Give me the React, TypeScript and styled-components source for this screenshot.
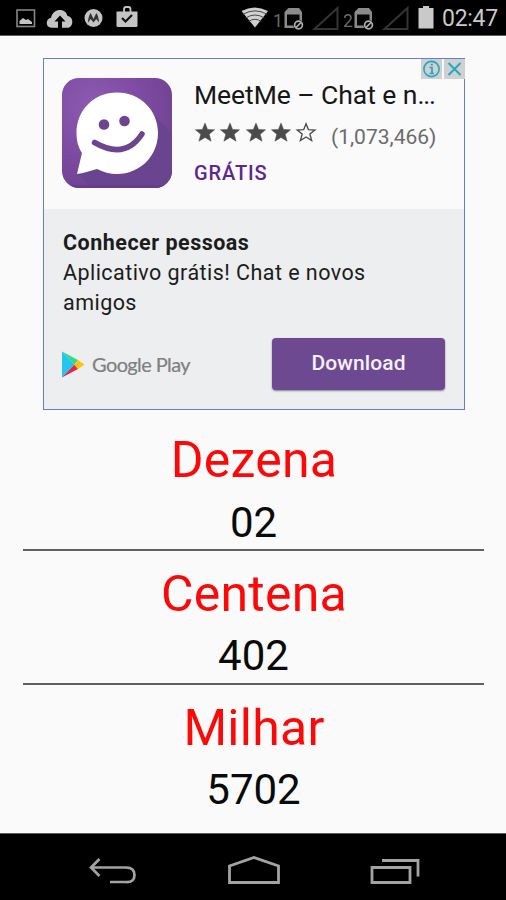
import React from "react";
import styled, { createGlobalStyle } from "styled-components";

const GlobalStyle = createGlobalStyle`
  * { box-sizing: border-box; }
  body { margin: 0; background: #fafafa; }
`;

const Screen = styled.div`
  width: 506px;
  height: 900px;
  display: flex;
  flex-direction: column;
  overflow: hidden;
  background: #fafafa;
  color: #000;
  font-family: Roboto, "Liberation Sans", sans-serif;
`;

const StatusBar = styled.header`
  height: 36px;
  flex: none;
  display: flex;
  justify-content: space-between;
  background: #000;
  border-bottom: 1px solid #5c5c5c;
`;

const StatusGroup = styled.div`
  display: flex;
  height: 35px;
`;

const Clock = styled.time`
  width: 64px;
  font-size: 23px;
  line-height: 37px;
  letter-spacing: -0.3px;
  color: #c9c9c9;
`;

const Content = styled.main`
  flex: 1;
  display: flex;
  flex-direction: column;
  padding: 22px 22px 0 23px;
`;

const AdCard = styled.section`
  position: relative;
  width: 422px;
  height: 352px;
  margin-left: 20px;
  display: flex;
  flex-direction: column;
  border: 1.5px solid #6580c8;
`;

const AdChoices = styled.div`
  position: absolute;
  top: 0;
  right: -1px;
  display: flex;
  gap: 2px;
`;

const AdBadge = styled.span`
  width: 21px;
  height: 20px;
  display: flex;
  background: #d0d0d0;
`;

const AdHeader = styled.div`
  height: 150px;
  display: flex;
  padding: 18.5px 0 0 18px;
`;

const AdInfo = styled.div`
  padding-left: 22px;
  display: flex;
  flex-direction: column;
`;

const AdTitle = styled.h1`
  margin: 1px 0 0;
  font-weight: 400;
  font-size: 26.5px;
  line-height: 32px;
  letter-spacing: -0.06px;
  white-space: nowrap;
  color: #161616;
`;

const Ellipsis = styled.span`
  letter-spacing: -1.2px;
`;

const RatingRow = styled.div`
  height: 34px;
  margin: 9px 0 0 -1px;
  display: flex;
  align-items: flex-start;
`;

const ReviewCount = styled.span`
  margin-left: 11.5px;
  font-size: 21px;
  line-height: 34px;
  color: #6b6b6b;
`;

const Price = styled.span`
  margin-top: 7px;
  font-size: 20px;
  font-weight: 500;
  line-height: 24px;
  letter-spacing: 0.9px;
  color: #5e2590;
`;

const AdBody = styled.div`
  flex: 1;
  display: flex;
  flex-direction: column;
  padding: 18px 18px 0 19px;
  background: #eceeef;
  color: #1c1c1c;
`;

const AdHeadline = styled.h2`
  margin: 0;
  font-size: 21.5px;
  font-weight: 700;
  line-height: 31px;
  letter-spacing: 0.5px;
`;

const AdText = styled.p`
  margin: 0;
  font-size: 21.5px;
  line-height: 30px;
  letter-spacing: 0.45px;
`;

const AdFooter = styled.div`
  display: flex;
  justify-content: space-between;
  margin-top: 20px;
`;

const StoreBadge = styled.div`
  display: flex;
  padding-top: 13px;
  margin-left: -1px;
`;

const StoreName = styled.span`
  margin-left: 7px;
  font-family: Lato, sans-serif;
  font-size: 20px;
  line-height: 27px;
  letter-spacing: -0.6px;
  color: #7e8082;
  -webkit-text-stroke: 0.2px #7e8082;
  white-space: nowrap;
`;

const DownloadButton = styled.button`
  width: 173px;
  height: 52px;
  margin-right: 1px;
  padding: 0 0 1px;
  border: 0;
  border-radius: 4px;
  background: #6d4992;
  box-shadow: 0 1px 2px rgba(0, 0, 0, 0.45);
  color: #f6effb;
  font: 500 21px/51px Roboto, sans-serif;
  letter-spacing: 0.1px;
`;

const Results = styled.div`
  padding-top: 20px;
`;

const ResultGroup = styled.section<{ $last?: boolean }>`
  height: ${(p) => (p.$last ? "118px" : "121px")};
  margin-bottom: 12.8px;
  text-align: center;
  border-bottom: ${(p) => (p.$last ? "0" : "2px solid #606060")};
`;

const ResultLabel = styled.h3`
  margin: 0;
  padding-left: 1px;
  font-size: 50px;
  font-weight: 400;
  line-height: 60px;
  letter-spacing: 0.25px;
  color: #fd0808;
`;

const ResultValue = styled.div`
  margin-top: 7.6px;
  font-size: 42px;
  line-height: 50px;
  color: #0a0a0a;
`;

const NavBar = styled.nav`
  height: 67px;
  flex: none;
  background: #000;
  border-top: 1px solid #5c5c5c;
  display: flex;
  justify-content: space-between;
  align-items: flex-start;
  padding: 16px 85px 0 87px;
`;

const Icon = styled.svg`
  display: block;
  flex: none;
`;

const NotificationIcons = () => (
  <Icon width="150" height="35" viewBox="0 0 150 35">
    <rect x="17" y="10" width="17.5" height="16.500" fill="none" stroke="#858585" strokeWidth="1.6" />
    <path d="M19.500 24v-3l3.500-3 3 2 2-1 4 3v2z" fill="#c4c4c4" />
    <path
      d="M51.500 27.800C45 27.800 45.500 18.500 51 17.800C53 8 65.500 7.500 67.500 16C74.500 17 73.500 27.800 67.500 27.800H62V21.500h3.500L60 15.500 54.500 21.500h3.500v6.300z"
      fill="#c4c4c4"
    />
    <circle cx="93.500" cy="18" r="9" fill="#c4c4c4" />
    <path d="M88 22.500c0-4 1.500-8 2.700-9.500l2.800 6 2.800-6c1.200 1.500 2.700 5.500 2.700 9.500l-2.700-3.500-2.800 3.500-2.800-3.500z" fill="#333" />
    <path d="M124 12V9.500q0-2.500 2-2.500h2.500q2 0 2 2.500V12" fill="none" stroke="#c4c4c4" strokeWidth="1.800" />
    <path d="M116.500 11.500h21v14q0 1.500-1.500 1.500h-18q-1.500 0-1.500-1.500z" fill="#c4c4c4" />
    <path d="M122 18l3.500 3.500 6.500-6.500" fill="none" stroke="#111" strokeWidth="2.200" />
  </Icon>
);

const SimIcon = ({ slot }: { slot: string }) => (
  <Icon width="34" height="35" viewBox="0 0 34 35">
    <text x="-1" y="26.500" fontSize="17.500" fill="#6a6a6a" fontFamily="Roboto">{slot}</text>
    <path d="M10.500 12l4-4h10.500l3 4v16H10.500z" fill="#8b8b8b" />
    <path d="M13 14.500h12.500v11H13z" fill="#050505" />
    <circle cx="24.500" cy="25" r="5.200" fill="#000" />
    <circle cx="24.500" cy="25" r="3.900" fill="none" stroke="#b0b0b0" strokeWidth="1.700" />
    <path d="M22 27.500l5-5" stroke="#b0b0b0" strokeWidth="1.700" />
  </Icon>
);

const SignalIcon = () => (
  <Icon width="36" height="35" viewBox="0 0 36 35">
    <path d="M6.500 29L29.500 8v21z" fill="none" stroke="#343434" strokeWidth="2" />
  </Icon>
);

const WifiIcon = () => (
  <Icon width="33" height="35" viewBox="0 0 33 35">
    <path d="M.5 11Q13.500 4 27 11L14 27.500z" fill="#d0d0d0" />
    <path d="M2 14.200q12-6.700 24 0M4.500 18q9.500-6 19 0M7.500 21.500q6.500-4.500 13 0" fill="none" stroke="#484848" strokeWidth="1" />
  </Icon>
);

const BatteryIcon = () => (
  <Icon width="28" height="35" viewBox="0 0 28 35">
    <path d="M9 6h6v2h4.500v20.500H4.500V8H9z" fill="#c9c9c9" />
  </Icon>
);

const AppIcon = () => (
  <Icon width="110" height="110" viewBox="0 0 110 110">
    <defs>
      <radialGradient id="tile" cx="0.28" cy="0.25" r="0.8">
        <stop offset="0" stopColor="#8d5bb2" />
        <stop offset="0.5" stopColor="#804ca5" />
        <stop offset="1" stopColor="#704291" />
      </radialGradient>
      <clipPath id="tileClip">
        <rect width="110" height="110" rx="17" />
      </clipPath>
    </defs>
    <g clipPath="url(#tileClip)">
      <rect width="110" height="110" fill="url(#tile)" />
      <path d="M88 33l22 22v55H29L15 96z" fill="#6b448f" />
      <rect y="107" width="110" height="3" fill="#613988" opacity="0.6" />
    </g>
    <path
      d="M55 14.500C78 14.500 96 32 96 55S78 96 55 96C48 96 41 94 35 91C28 93 21 95.500 15 96L20 75C16 69 14.500 62 14.500 55C14.500 32 32 14.500 55 14.500z"
      fill="#fff"
    />
    <circle cx="42" cy="46.500" r="5.300" fill="#6c448f" />
    <circle cx="62.500" cy="43" r="5.300" fill="#6c448f" />
    <path d="M32.500 64.500Q63 82 80 56" fill="none" stroke="#6c448f" strokeWidth="5.500" strokeLinecap="round" />
  </Icon>
);

const Star = ({ filled }: { filled: boolean }) => (
  <Icon width="25.300" height="26" viewBox="0 0 25.300 26">
    <path
      d="M12 3l2.600 6.400 7 .4-5.400 4.400 1.900 7L12 17.400 5.900 21.200l1.900-7L2.400 9.800l7-.4z"
      fill={filled ? "#4b4b4b" : "none"}
      stroke="#4b4b4b"
      strokeWidth={filled ? 0.5 : 1.5}
      transform={filled ? undefined : "translate(1 1) scale(.92)"}
    />
  </Icon>
);

const InfoIcon = () => (
  <Icon width="21" height="20" viewBox="0 0 21 20">
    <circle cx="10.500" cy="10" r="7.600" fill="none" stroke="#20a9c1" strokeWidth="1.600" />
    <path d="M8.500 8.500h2.500v6M8.500 14.500h4.500M9.800 5.700h2" fill="none" stroke="#20a9c1" strokeWidth="1.700" />
  </Icon>
);

const CloseIcon = () => (
  <Icon width="21" height="20" viewBox="0 0 21 20">
    <path d="M4.500 4l12 12M16.500 4l-12 12" stroke="#20a9c1" strokeWidth="2" />
  </Icon>
);

const PlayIcon = () => (
  <Icon width="23" height="27" viewBox="0 0 23 27">
    <path d="M0 .5v26L12.500 13.500z" fill="#22c6ee" />
    <path d="M0 .5l16 8.500-3.500 4.500z" fill="#2edc8c" />
    <path d="M0 26.500l16-8.500-3.500-4.500z" fill="#e3264a" />
    <path d="M16 9l6.500 4.500L16 18l-4-4.500z" fill="#fdc60a" />
  </Icon>
);

const BackIcon = () => (
  <Icon width="50" height="36" viewBox="0 0 50 36">
    <path d="M3.500 17.500H39Q47.500 17.500 47.500 25T39 32H23M12.500 9L4 17.500L12.500 26" fill="none" stroke="#a3a3a3" strokeWidth="2.700" />
  </Icon>
);

const HomeIcon = () => (
  <Icon width="54" height="36" viewBox="0 0 54 36">
    <path d="M2.500 32.500V16L27 7.500L51.500 16V32.500z" fill="none" stroke="#a3a3a3" strokeWidth="2.800" />
  </Icon>
);

const RecentsIcon = () => (
  <Icon width="51" height="36" viewBox="0 0 51 36">
    <path d="M2 17.500h38v15H2zM12 10.500H48V26.500" fill="none" stroke="#a3a3a3" strokeWidth="2.800" />
  </Icon>
);

const results = [
  { label: "Dezena", value: "02" },
  { label: "Centena", value: "402" },
  { label: "Milhar", value: "5702" },
];

export default function App() {
  return (
    <>
      <GlobalStyle />
      <Screen>
        <StatusBar>
          <StatusGroup>
            <NotificationIcons />
          </StatusGroup>
          <StatusGroup>
            <WifiIcon />
            <SimIcon slot="1" />
            <SignalIcon />
            <SimIcon slot="2" />
            <SignalIcon />
            <BatteryIcon />
            <Clock>02:47</Clock>
          </StatusGroup>
        </StatusBar>
        <Content>
          <AdCard>
            <AdHeader>
              <AppIcon />
              <AdInfo>
                <AdTitle>
                  MeetMe – Chat e n<Ellipsis>...</Ellipsis>
                </AdTitle>
                <RatingRow>
                  {[1, 2, 3, 4, 5].map((n) => (
                    <Star key={n} filled={n < 5} />
                  ))}
                  <ReviewCount>(1,073,466)</ReviewCount>
                </RatingRow>
                <Price>GRÁTIS</Price>
              </AdInfo>
            </AdHeader>
            <AdBody>
              <AdHeadline>Conhecer pessoas</AdHeadline>
              <AdText>
                Aplicativo grátis! Chat e novos
                <br />
                amigos
              </AdText>
              <AdFooter>
                <StoreBadge>
                  <PlayIcon />
                  <StoreName>Google Play</StoreName>
                </StoreBadge>
                <DownloadButton>Download</DownloadButton>
              </AdFooter>
            </AdBody>
            <AdChoices>
              <AdBadge>
                <InfoIcon />
              </AdBadge>
              <AdBadge>
                <CloseIcon />
              </AdBadge>
            </AdChoices>
          </AdCard>
          <Results>
            {results.map((r, i) => (
              <ResultGroup key={r.label} $last={i === results.length - 1}>
                <ResultLabel>{r.label}</ResultLabel>
                <ResultValue>{r.value}</ResultValue>
              </ResultGroup>
            ))}
          </Results>
        </Content>
        <NavBar>
          <BackIcon />
          <HomeIcon />
          <RecentsIcon />
        </NavBar>
      </Screen>
    </>
  );
}
